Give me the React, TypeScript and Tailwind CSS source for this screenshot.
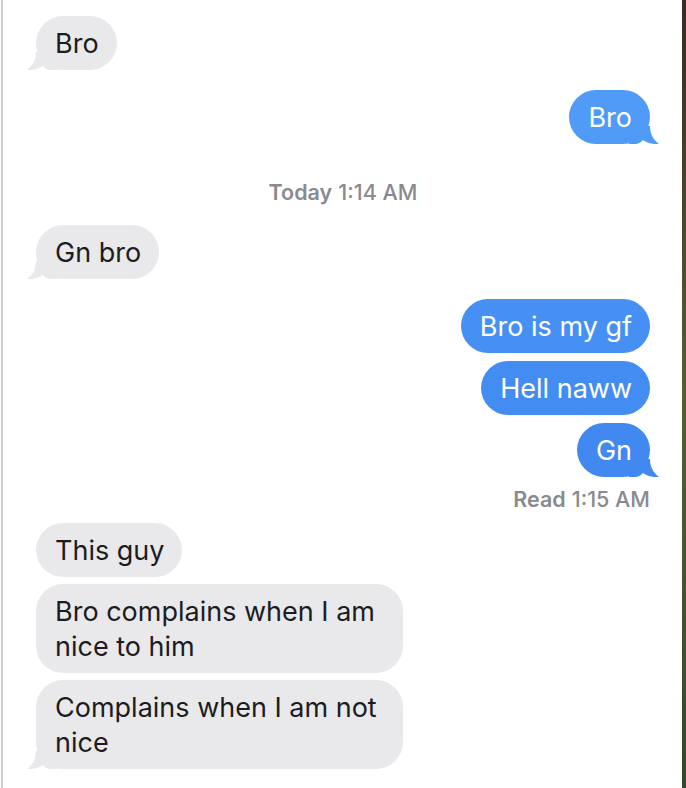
type Msg = {
  from: "me" | "them";
  text: string;
  tail?: boolean;
  color?: string;
  mt: string;
};

const font = { fontFamily: '"Inter", "Liberation Sans", sans-serif' };

// tail drawn under the bubble's bottom corner
const Tail = ({ side, color }: { side: "left" | "right"; color: string }) => (
  <svg
    width="30"
    height="18"
    viewBox="0 0 30 18"
    className={
      side === "left"
        ? "absolute bottom-0 left-[-9px]"
        : "absolute bottom-0 right-[-9px] scale-x-[-1]"
    }
  >
    <path
      d="M9 0 C9 9 5 14 0 18 C6 18.5 12 17 16 14 C18 16 20 18 25 18 L30 18 L30 0 Z"
      fill={color}
    />
  </svg>
);

const Bubble = ({ msg }: { msg: Msg }) => {
  const mine = msg.from === "me";
  const bg = mine ? msg.color ?? "#4a90f4" : "#e9e9eb";
  return (
    <div className={`flex ${mine ? "justify-end" : "justify-start"} ${msg.mt}`}>
      <div
        className={`relative max-w-[367px] rounded-[27px] pl-[19px] pr-[18px] pt-[10px] pb-[9px] text-[27px] leading-[35px] ${
          mine ? "text-white" : "text-[#1c1c1e]"
        }`}
        style={{ backgroundColor: bg }}
      >
        {msg.tail && <Tail side={mine ? "right" : "left"} color={bg} />}
        <span className="relative">{msg.text}</span>
      </div>
    </div>
  );
};

const Stamp = ({
  bold,
  rest,
  align,
  mt,
  mb,
}: {
  bold: string;
  rest: string;
  align: string;
  mt: string;
  mb: string;
}) => (
  <div
    className={`${align} ${mt} ${mb} text-[21.5px] leading-[24px] text-[#8a8a8e]`}
  >
    <span className="font-semibold">{bold}</span>{" "}
    <span className="font-medium">{rest}</span>
  </div>
);

export default function App() {
  return (
    <div className="flex h-[788px] w-[686px] overflow-hidden bg-white" style={font}>
      <div className="ml-[1px] w-[3px] shrink-0 border-l-2 border-[#cdcdcd]" />
      <div className="flex-1 pl-[32px] pr-[32px] pt-[16px]">
        <Bubble msg={{ from: "them", text: "Bro", tail: true, mt: "" }} />
        <Bubble
          msg={{ from: "me", text: "Bro", tail: true, color: "#4f9bf7", mt: "mt-[20px]" }}
        />
        <Stamp
          bold="Today"
          rest="1:14 AM"
          align="text-center"
          mt="mt-[36px]"
          mb="mb-[21px]"
        />
        <Bubble msg={{ from: "them", text: "Gn bro", tail: true, mt: "" }} />
        <Bubble
          msg={{ from: "me", text: "Bro is my gf", color: "#4690f4", mt: "mt-[20px]" }}
        />
        <Bubble
          msg={{ from: "me", text: "Hell naww", color: "#438cf2", mt: "mt-[8px]" }}
        />
        <Bubble
          msg={{ from: "me", text: "Gn", tail: true, color: "#4189f0", mt: "mt-[8px]" }}
        />
        <Stamp
          bold="Read"
          rest="1:15 AM"
          align="text-right"
          mt="mt-[10px]"
          mb="mb-[12px]"
        />
        <Bubble msg={{ from: "them", text: "This guy", mt: "" }} />
        <Bubble
          msg={{ from: "them", text: "Bro complains when I am nice to him", mt: "mt-[7px]" }}
        />
        <Bubble
          msg={{
            from: "them",
            text: "Complains when I am not nice",
            tail: true,
            mt: "mt-[7px]",
          }}
        />
      </div>
      <div className="w-[4px] shrink-0 bg-gradient-to-b from-[#3b2a22] via-[#56602e] to-[#2f4a2a]" />
    </div>
  );
}
